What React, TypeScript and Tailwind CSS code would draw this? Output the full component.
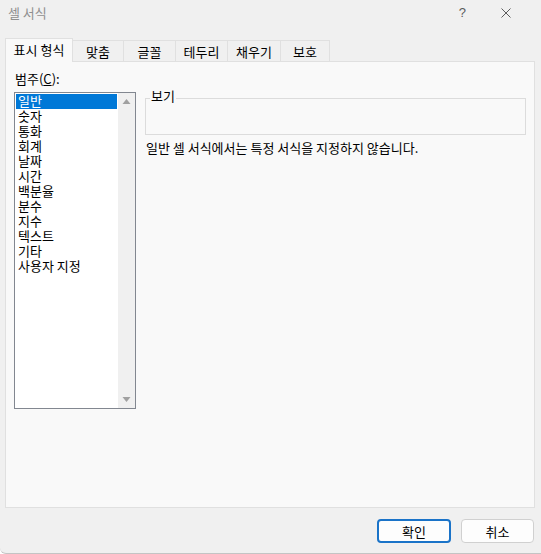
import React from 'react';

const TABS = [
  { label: '표시 형식', width: 'w-[68px]' },
  { label: '맞춤', width: 'w-[51px]' },
  { label: '글꼴', width: 'w-[52px]' },
  { label: '테두리', width: 'w-[52px]' },
  { label: '채우기', width: 'w-[53px]' },
  { label: '보호', width: 'w-[49px]' },
];

const CATEGORIES = [
  '일반',
  '숫자',
  '통화',
  '회계',
  '날짜',
  '시간',
  '백분율',
  '분수',
  '지수',
  '텍스트',
  '기타',
  '사용자 지정',
];

function Arrow({ down }: { down?: boolean }) {
  return (
    <svg width="17" height="17" viewBox="0 0 17 17">
      {down ? (
        <polygon points="4.5,6 12.5,6 8.5,11" fill="#a0a0a0" />
      ) : (
        <polygon points="4.5,11 12.5,11 8.5,6" fill="#a0a0a0" />
      )}
    </svg>
  );
}

export default function App() {
  const selected = 0;

  return (
    <div className="w-[541px] h-[554px] bg-[#f0f0f0] flex flex-col font-['Noto_Sans_CJK_KR','Liberation_Sans',sans-serif] text-[13px] text-black border-b border-[#c4c4c4] rounded-bl-[6px] overflow-hidden">
      {/* title bar */}
      <div className="h-[25px] flex items-center pl-[8px] pr-[30px]">
        <span className="text-[#8f8f8f] leading-[15px]">셀 서식</span>
        <span className="ml-auto text-[#5c5c5c] text-[13px] leading-[15px] font-['Liberation_Sans',sans-serif]">?</span>
        <svg className="ml-[35px]" width="10" height="10" viewBox="0 0 10 10">
          <path d="M0.5 0.5 L9.5 9.5 M9.5 0.5 L0.5 9.5" stroke="#5c5c5c" strokeWidth="1" />
        </svg>
      </div>

      {/* tabs */}
      <div className="mt-[13px] ml-[5px] h-[24px] flex items-end">
        {TABS.map((t, i) => (
          <div
            key={t.label}
            className={
              i === selected
                ? `${t.width} h-[24px] pb-[3px] relative z-10 bg-[#f9f9f9] border-l border-t border-r border-[#e0e0e0] flex items-center justify-center leading-[15px]`
                : `${t.width} h-[22px] pb-[1px] bg-[#f0f0f0] border-t border-r border-[#e0e0e0] flex items-center justify-center leading-[15px]`
            }
          >
            {t.label}
          </div>
        ))}
      </div>

      {/* panel */}
      <div className="-mt-px ml-[5px] w-[530px] h-[447px] bg-[#f9f9f9] border border-[#e0e0e0] flex pt-[9px] pl-[8px]">
        <div className="w-[122px] flex flex-col">
          <div className="ml-[1px] leading-[15px]">
            범주(<span className="underline">C</span>):
          </div>
          <div className="mt-[6px] h-[317px] bg-white border border-[#828790] flex">
            <div className="w-[103px] px-[1px] pt-[1px]">
              {CATEGORIES.map((c, i) => (
                <div
                  key={c}
                  className={
                    i === selected
                      ? 'h-[15px] leading-[13px] pl-[2px] bg-[#0078d7] text-white'
                      : 'h-[15px] leading-[13px] pl-[2px]'
                  }
                >
                  {c}
                </div>
              ))}
            </div>
            <div className="w-[17px] bg-[#f0f0f0] flex flex-col justify-between">
              <Arrow />
              <Arrow down />
            </div>
          </div>
        </div>

        <div className="ml-[9px] flex flex-col">
          <fieldset className="mt-[17px] w-[381px] h-[47px] border border-[#dcdcdc]">
            <legend className="ml-[4px] px-[1px] pb-[6px] leading-[15px]">보기</legend>
          </fieldset>
          <div className="mt-[5px] ml-[1px] leading-[15px]">
            일반 셀 서식에서는 특정 서식을 지정하지 않습니다.
          </div>
        </div>
      </div>

      {/* buttons */}
      <div className="mt-[11px] pr-[7px] flex justify-end gap-[10px]">
        <button className="w-[74px] h-[24px] bg-[#fdfdfd] border-2 border-[#1a73c8] rounded-[4px] leading-[15px]">
          확인
        </button>
        <button className="w-[73px] h-[24px] bg-[#fdfdfd] border border-[#d0d0d0] rounded-[4px] leading-[15px]">
          취소
        </button>
      </div>
    </div>
  );
}
